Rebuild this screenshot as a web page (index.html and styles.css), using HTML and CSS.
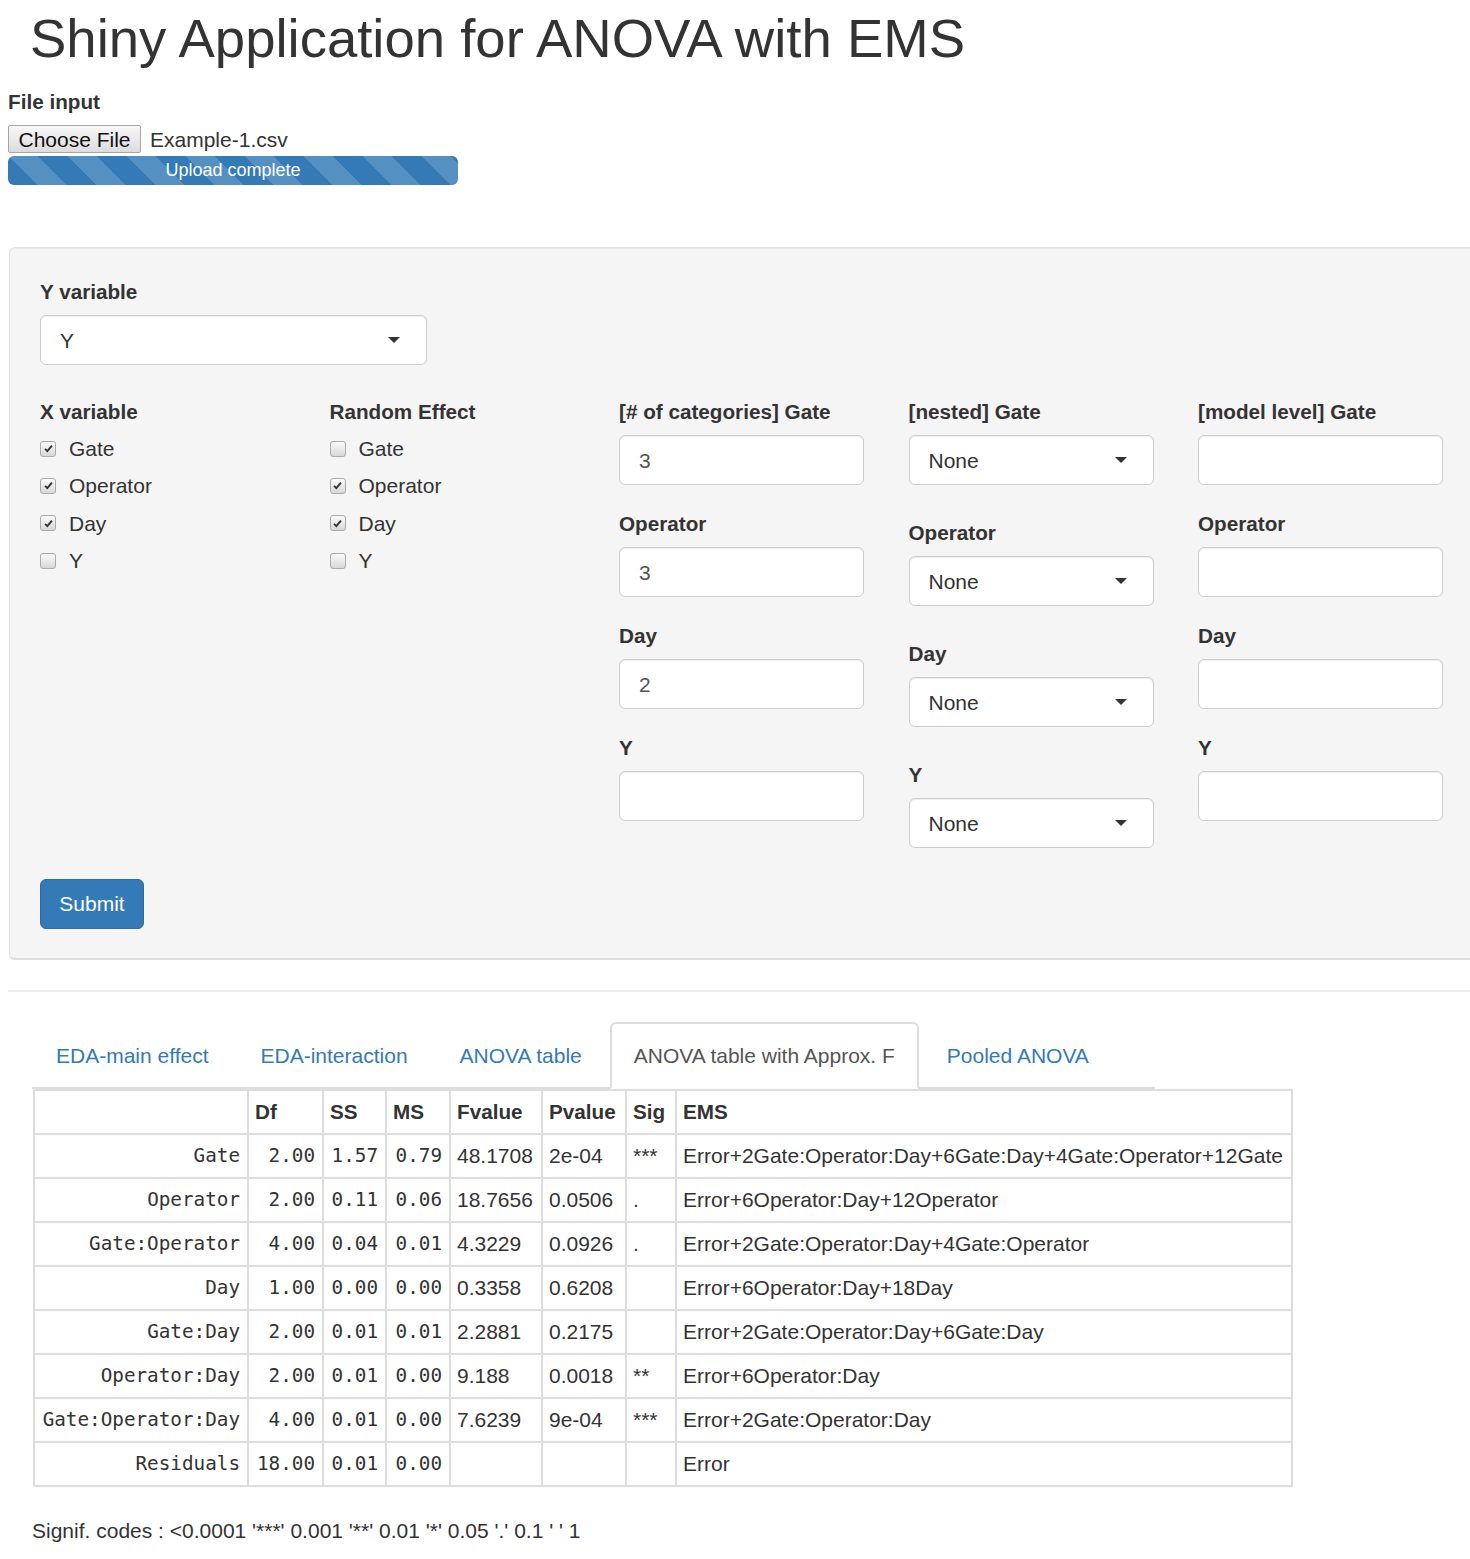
FILE: index.html
```html
<!DOCTYPE html>
<html>
<head>
<meta charset="utf-8">
<title>Shiny Application for ANOVA with EMS</title>
<link rel="stylesheet" href="styles.css">
</head>
<body>
<div class="page">
  <h1 class="title">Shiny Application for ANOVA with EMS</h1>

  <div class="file-group">
    <label class="lbl">File input</label>
    <div class="file-row"><span class="file-btn">Choose File</span><span class="file-name">Example-1.csv</span></div>
    <div class="progress"><div class="progress-bar">Upload complete</div></div>
  </div>

  <div class="well">
    <div class="fg">
      <label class="lbl">Y variable</label>
      <div class="select sel-y"><span>Y</span><i class="caret"></i></div>
    </div>

    <div class="grid">
      <div class="col">
        <label class="lbl">X variable</label>
        <div class="cbs">
          <div class="cb-row"><span class="cb"><svg viewBox="0 0 16 16" width="11" height="11"><path d="M3 8.5 L6.3 11.8 L13 3.8" fill="none" stroke="#333" stroke-width="2.8"/></svg></span><span>Gate</span></div>
          <div class="cb-row"><span class="cb"><svg viewBox="0 0 16 16" width="11" height="11"><path d="M3 8.5 L6.3 11.8 L13 3.8" fill="none" stroke="#333" stroke-width="2.8"/></svg></span><span>Operator</span></div>
          <div class="cb-row"><span class="cb"><svg viewBox="0 0 16 16" width="11" height="11"><path d="M3 8.5 L6.3 11.8 L13 3.8" fill="none" stroke="#333" stroke-width="2.8"/></svg></span><span>Day</span></div>
          <div class="cb-row"><span class="cb"></span><span>Y</span></div>
        </div>
      </div>

      <div class="col">
        <label class="lbl">Random Effect</label>
        <div class="cbs">
          <div class="cb-row"><span class="cb"></span><span>Gate</span></div>
          <div class="cb-row"><span class="cb"><svg viewBox="0 0 16 16" width="11" height="11"><path d="M3 8.5 L6.3 11.8 L13 3.8" fill="none" stroke="#333" stroke-width="2.8"/></svg></span><span>Operator</span></div>
          <div class="cb-row"><span class="cb"><svg viewBox="0 0 16 16" width="11" height="11"><path d="M3 8.5 L6.3 11.8 L13 3.8" fill="none" stroke="#333" stroke-width="2.8"/></svg></span><span>Day</span></div>
          <div class="cb-row"><span class="cb"></span><span>Y</span></div>
        </div>
      </div>

      <div class="col col-text">
        <div class="fg"><label class="lbl">[# of categories] Gate</label><div class="input">3</div></div>
        <div class="fg"><label class="lbl">Operator</label><div class="input">3</div></div>
        <div class="fg"><label class="lbl">Day</label><div class="input">2</div></div>
        <div class="fg"><label class="lbl">Y</label><div class="input"></div></div>
      </div>

      <div class="col col-sel">
        <div class="fg"><label class="lbl">[nested] Gate</label><div class="select"><span>None</span><i class="caret"></i></div></div>
        <div class="fg"><label class="lbl">Operator</label><div class="select"><span>None</span><i class="caret"></i></div></div>
        <div class="fg"><label class="lbl">Day</label><div class="select"><span>None</span><i class="caret"></i></div></div>
        <div class="fg"><label class="lbl">Y</label><div class="select"><span>None</span><i class="caret"></i></div></div>
      </div>

      <div class="col col-text">
        <div class="fg"><label class="lbl">[model level] Gate</label><div class="input"></div></div>
        <div class="fg"><label class="lbl">Operator</label><div class="input"></div></div>
        <div class="fg"><label class="lbl">Day</label><div class="input"></div></div>
        <div class="fg"><label class="lbl">Y</label><div class="input"></div></div>
      </div>
    </div>

    <button class="btn-submit" type="button">Submit</button>
  </div>

  <hr class="sep">

  <ul class="tabs">
    <li class="tab">EDA-main effect</li>
    <li class="tab">EDA-interaction</li>
    <li class="tab">ANOVA table</li>
    <li class="tab active">ANOVA table with Approx. F</li>
    <li class="tab">Pooled ANOVA</li>
  </ul>

  <table class="anova">
    <colgroup>
      <col class="c1"><col class="c2"><col class="c3"><col class="c4"><col class="c5"><col class="c6"><col class="c7"><col class="c8">
    </colgroup>
    <thead>
      <tr><th></th><th>Df</th><th>SS</th><th>MS</th><th>Fvalue</th><th>Pvalue</th><th>Sig</th><th>EMS</th></tr>
    </thead>
    <tbody>
      <tr><td class="mono">Gate</td><td class="mono">2.00</td><td class="mono">1.57</td><td class="mono">0.79</td><td>48.1708</td><td>2e-04</td><td>***</td><td>Error+2Gate:Operator:Day+6Gate:Day+4Gate:Operator+12Gate</td></tr>
      <tr><td class="mono">Operator</td><td class="mono">2.00</td><td class="mono">0.11</td><td class="mono">0.06</td><td>18.7656</td><td>0.0506</td><td>.</td><td>Error+6Operator:Day+12Operator</td></tr>
      <tr><td class="mono">Gate:Operator</td><td class="mono">4.00</td><td class="mono">0.04</td><td class="mono">0.01</td><td>4.3229</td><td>0.0926</td><td>.</td><td>Error+2Gate:Operator:Day+4Gate:Operator</td></tr>
      <tr><td class="mono">Day</td><td class="mono">1.00</td><td class="mono">0.00</td><td class="mono">0.00</td><td>0.3358</td><td>0.6208</td><td></td><td>Error+6Operator:Day+18Day</td></tr>
      <tr><td class="mono">Gate:Day</td><td class="mono">2.00</td><td class="mono">0.01</td><td class="mono">0.01</td><td>2.2881</td><td>0.2175</td><td></td><td>Error+2Gate:Operator:Day+6Gate:Day</td></tr>
      <tr><td class="mono">Operator:Day</td><td class="mono">2.00</td><td class="mono">0.01</td><td class="mono">0.00</td><td>9.188</td><td>0.0018</td><td>**</td><td>Error+6Operator:Day</td></tr>
      <tr><td class="mono">Gate:Operator:Day</td><td class="mono">4.00</td><td class="mono">0.01</td><td class="mono">0.00</td><td>7.6239</td><td>9e-04</td><td>***</td><td>Error+2Gate:Operator:Day</td></tr>
      <tr><td class="mono">Residuals</td><td class="mono">18.00</td><td class="mono">0.01</td><td class="mono">0.00</td><td></td><td></td><td></td><td>Error</td></tr>
    </tbody>
  </table>

  <p class="signif">Signif. codes : &lt;0.0001 '***' 0.001 '**' 0.01 '*' 0.05 '.' 0.1 ' ' 1</p>
</div>
</body>
</html>
```
FILE: styles.css
```css
html, body {
  margin: 0;
  padding: 0;
  overflow-x: hidden;
  background: #fff;
}
body {
  font-family: "Liberation Sans", Arial, sans-serif;
  font-size: 21px;
  line-height: 29px;
  color: #333;
}
.page {
  padding: 0 0 10px 8px;
}
.title {
  margin: 0;
  padding: 9px 0 0 22px;
  font-size: 54.5px;
  line-height: 59px;
  font-weight: normal;
  color: #333;
}
.file-group {
  margin-top: 19px;
}
.lbl {
  display: block;
  font-weight: bold;
  font-size: 20.7px;
  line-height: 29px;
  margin-bottom: 9px;
  color: #333;
}
.file-row {
  display: flex;
  align-items: center;
  height: 28px;
}
.file-btn {
  box-sizing: border-box;
  height: 28px;
  width: 133px;
  border: 1px solid #a6a6a6;
  border-radius: 2px;
  background: linear-gradient(#f7f7f7, #dddddd);
  color: #111;
  font-size: 21px;
  display: flex;
  align-items: center;
  justify-content: center;
}
.file-name {
  margin-left: 9px;
}
.progress {
  margin-top: 3px;
  width: 450px;
  height: 29px;
  border-radius: 6px;
  overflow: hidden;
  background: #f5f5f5;
}
.progress-bar {
  height: 100%;
  background-color: #337ab7;
  background-image: linear-gradient(45deg, rgba(255,255,255,.17) 25%, transparent 25%, transparent 50%, rgba(255,255,255,.17) 50%, rgba(255,255,255,.17) 75%, transparent 75%, transparent);
  background-size: 59px 59px;
  color: #fff;
  font-size: 18px;
  line-height: 29px;
  text-align: center;
}
.well {
  margin: 62px 0 0 1px;
  width: 1480px;
  box-sizing: border-box;
  background: #f5f5f5;
  border: 1px solid #e3e3e3;
  border-bottom: 2px solid #dedede;
  border-radius: 6px;
  padding: 29px 30px 29px 30px;
  box-shadow: inset 0 1px 1px rgba(0,0,0,.05);
}
.select {
  box-sizing: border-box;
  height: 50px;
  width: 245px;
  background: #fff;
  border: 1px solid #ccc;
  border-radius: 6px;
  box-shadow: inset 0 1px 1px rgba(0,0,0,.075);
  display: flex;
  align-items: center;
  justify-content: space-between;
  padding: 0 26px 0 19px;
  color: #333;
}
.sel-y {
  width: 387px;
}
.caret {
  display: block;
  width: 0;
  height: 0;
  border-style: solid;
  border-width: 6px 6px 0 6px;
  border-color: #333 transparent transparent transparent;
}
.grid {
  display: grid;
  grid-template-columns: repeat(5, 289.5px);
  margin-top: 32px;
  margin-bottom: 31px;
  align-items: start;
}
.col {
  display: flex;
  flex-direction: column;
}
.col-text {
  gap: 24px;
}
.col-sel {
  gap: 33px;
}
.input {
  box-sizing: border-box;
  height: 50px;
  width: 245px;
  background: #fff;
  border: 1px solid #ccc;
  border-radius: 6px;
  box-shadow: inset 0 1px 1px rgba(0,0,0,.075);
  padding-left: 19px;
  display: flex;
  align-items: center;
  color: #555;
}
.cbs {
  margin-top: -5px;
}
.cb-row {
  height: 37.33px;
  display: flex;
  align-items: center;
}
.cb {
  box-sizing: border-box;
  width: 16px;
  height: 16px;
  margin-left: 0;
  margin-right: 13px;
  border: 1px solid #aaa;
  border-radius: 3px;
  background: linear-gradient(#fbfbfb, #d8d8d8);
  display: flex;
  align-items: center;
  justify-content: center;
}
.btn-submit {
  box-sizing: border-box;
  height: 50px;
  width: 104px;
  background: #337ab7;
  border: 1px solid #2e6da4;
  border-radius: 6px;
  color: #fff;
  font-family: "Liberation Sans", Arial, sans-serif;
  font-size: 21px;
  padding: 0;
  display: block;
}
.sep {
  margin: 30px 0 0 0;
  border: 0;
  border-top: 2px solid #eee;
  height: 0;
}
.tabs {
  list-style: none;
  margin: 30px 0 0 24px;
  padding: 0;
  display: flex;
  width: 1123px;
  border-bottom: 2px solid #ddd;
}
.tab {
  margin-right: 4px;
  margin-bottom: -2px;
  padding: 17px 22px;
  border: 2px solid transparent;
  border-radius: 6px 6px 0 0;
  color: #337ab7;
  line-height: 29px;
}
.tab.active {
  color: #555;
  background: #fff;
  border-color: #ddd;
  border-bottom-color: transparent;
}
.anova {
  margin-left: 25px;
  border-collapse: collapse;
  table-layout: fixed;
  width: 1258px;
}
.c1 { width: 214px; }
.c2 { width: 75px; }
.c3 { width: 63px; }
.c4 { width: 64px; }
.c5 { width: 92px; }
.c6 { width: 84px; }
.c7 { width: 50px; }
.c8 { width: 616px; }
.anova th,
.anova td {
  border: 2px solid #ddd;
  padding: 6px 7px 6px 6px;
  line-height: 30px;
  text-align: left;
  white-space: nowrap;
  overflow: hidden;
}
.anova th {
  font-weight: bold;
  font-size: 20.7px;
}
.anova td.mono {
  font-family: "DejaVu Sans Mono", "Liberation Mono", monospace;
  font-size: 19.3px;
  text-align: right;
}
.signif {
  margin: 29px 0 0 24px;
}
```
